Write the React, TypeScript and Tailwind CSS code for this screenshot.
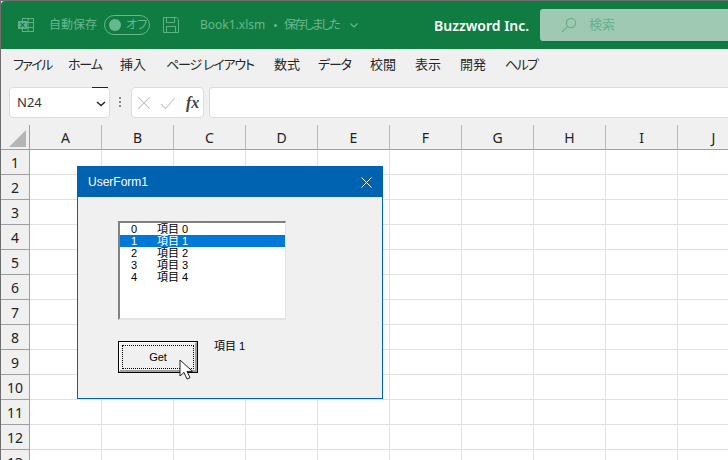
import React from "react";

const jp = "font-['Noto_Sans','Noto_Sans_CJK_JP',sans-serif] [font-feature-settings:'palt']";
const cols = ["A", "B", "C", "D", "E", "F", "G", "H", "I", "J"];
const rows = [1, 2, 3, 4, 5, 6, 7, 8, 9, 10, 11, 12, 13];
const tabs: [string, string][] = [
  ["ファイル", "w-[55px] tracking-[-1.6px]"],
  ["ホーム", "w-[52px] tracking-[-1.2px]"],
  ["挿入", "w-[46px]"],
  ["ページ レイアウト", "w-[108px] tracking-[-1.2px]"],
  ["数式", "w-[44px]"],
  ["データ", "w-[52px] tracking-[-1.2px]"],
  ["校閲", "w-[45px]"],
  ["表示", "w-[45px]"],
  ["開発", "w-[45px]"],
  ["ヘルプ", "w-[50px] tracking-[-1.6px]"],
];
const items = [0, 1, 2, 3, 4];

function TitleBar() {
  return (
    <div className="flex h-[48px] items-center rounded-tl-[4px] bg-[#107c41] text-[#66b88e]">
      <svg width="18" height="18" viewBox="0 0 18 18" className="ml-[16px]" fill="none" stroke="#5eb088" strokeWidth="1">
        <rect x="5.5" y="2.5" width="11" height="13" />
        <path d="M5.5 6.5h11M5.5 11.5h11M11 2.5v13" />
        <rect x="1" y="5" width="9" height="8" fill="#5eb088" stroke="none" />
        <path d="M3.5 6.8l4 4.4M7.5 6.8l-4 4.4" stroke="#107c41" strokeWidth="1.2" />
      </svg>
      <span className="ml-[14px] w-[50px] whitespace-nowrap text-[12px]">自動保存</span>
      <div className="ml-[5px] flex h-[20px] w-[46px] items-center rounded-full border border-[#66b88e]">
        <div className="ml-[4px] h-[12px] w-[12px] rounded-full bg-[#66b88e]" />
        <span className="ml-[5px] text-[12px] leading-none">オフ</span>
      </div>
      <svg width="16" height="16" viewBox="0 0 16 16" className="ml-[13px]" fill="none" stroke="#5eb088">
        <path d="M.5.5h13l2 2v13H.5z" />
        <path d="M3.5 .5v5h8v-5M3.5 15.5v-6h9v6" />
      </svg>
      <span className="ml-[21px] w-[68px] whitespace-nowrap text-[12px]">Book1.xlsm</span>
      <div className="ml-[6px] h-[3px] w-[3px] rounded-full bg-[#66b88e]" />
      <span className="ml-[7px] w-[60px] whitespace-nowrap text-[12px] tracking-[-2px]">保存しました</span>
      <svg width="10" height="10" viewBox="0 0 10 10" className="ml-[5px]" fill="none" stroke="#66b88e" strokeWidth="1.2">
        <path d="M1.5 3.5L5 7l3.5-3.5" />
      </svg>
      <span className="ml-[75px] w-[92px] whitespace-nowrap text-[14px] font-semibold text-white">Buzzword Inc.</span>
      <div className="ml-[14px] flex h-[32px] flex-1 items-center rounded-l-[3px] bg-[#9fc9b3]">
        <svg width="16" height="16" viewBox="0 0 16 16" className="ml-[21px]" fill="none" stroke="#5fb58a" strokeWidth="1.2">
          <circle cx="10" cy="6" r="4.6" />
          <path d="M6.6 9.4L1 15" />
        </svg>
        <span className="ml-[12px] text-[13px] text-[#5fb58a]">検索</span>
      </div>
    </div>
  );
}

function Ribbon() {
  return (
    <div className="flex h-[31px] items-center pl-[12px] text-[13px] text-[#262626]">
      {tabs.map(([t, w]) => (
        <span key={t} className={`${w} shrink-0 whitespace-nowrap`}>
          {t}
        </span>
      ))}
    </div>
  );
}

function FormulaBar() {
  return (
    <div className="flex h-[45px] items-start pl-[8px] pt-[7px]">
      <div className="relative flex h-[31px] w-[101px] items-center justify-between rounded-[4px] border border-[#dcdcdc] bg-white pl-[7px] pr-[3px]">
        <span className="pt-[1px] text-[13px] text-[#333]">N24</span>
        <svg width="10" height="10" viewBox="0 0 10 10" className="mt-[2px]" fill="none" stroke="#222" strokeWidth="1.4">
          <path d="M1 3l4 3.5L9 3" />
        </svg>
        <div className="absolute right-[1px] top-[-1px] h-[1px] w-[16px] bg-[#222]" />
      </div>
      <div className="ml-[9px] mt-[10px] flex w-[3px] flex-col gap-[2px]">
        <div className="h-[2px] w-[2px] bg-[#8a8a8a]" />
        <div className="h-[2px] w-[2px] bg-[#8a8a8a]" />
        <div className="h-[2px] w-[2px] bg-[#8a8a8a]" />
      </div>
      <div className="ml-[9px] flex h-[31px] w-[73px] items-center rounded-[4px] border border-[#dcdcdc] bg-white">
        <svg width="12" height="12" viewBox="0 0 12 12" className="ml-[6px]" fill="none" stroke="#c4c4c4" strokeWidth="1.1">
          <path d="M0 0l12 12M12 0L0 12" />
        </svg>
        <svg width="16" height="14" viewBox="0 0 16 14" className="ml-[10px]" fill="none" stroke="#c4c4c4" strokeWidth="1.1">
          <path d="M1 8l4.5 4.5L15 2" />
        </svg>
        <span className="ml-[10px] font-['Liberation_Serif',serif] text-[16px] font-bold italic leading-none text-[#444]">fx</span>
      </div>
      <div className="ml-[5px] h-[31px] flex-1 rounded-l-[4px] border border-r-0 border-[#dcdcdc] bg-white" />
    </div>
  );
}

function Sheet() {
  return (
    <div className="flex-1 overflow-hidden">
      <div className="flex h-[25px] w-[760px] bg-[#f0f0f0] text-[14px] text-[#222]">
        <div className="flex h-[25px] w-[29px] shrink-0 items-end justify-end border-r border-b border-[#9f9f9f] pb-[2px] pr-[3px]">
          <div className="h-0 w-0 border-b-[17px] border-l-[17px] border-b-[#b5b5b5] border-l-transparent" />
        </div>
        {cols.map((c) => (
          <div key={c} className="flex h-[25px] w-[72px] shrink-0 items-center justify-center border-r border-b border-r-[#b8b8b8] border-b-[#9f9f9f]">
            {c}
          </div>
        ))}
      </div>
      {rows.map((r) => (
        <div key={r} className="flex h-[25px] w-[760px]">
          <div className="flex h-[25px] w-[29px] shrink-0 items-center justify-center border-r border-b border-[#9f9f9f] bg-[#f0f0f0] text-[14px] text-[#222]">
            {r}
          </div>
          {cols.map((c) => (
            <div key={c} className="h-[25px] w-[72px] shrink-0 border-r border-b border-[#e0e0e0] bg-white" />
          ))}
        </div>
      ))}
    </div>
  );
}

function ListBox() {
  return (
    <div className="h-[99px] w-[168px] border-t-2 border-r border-b-2 border-l-2 border-[#e3e3e3] border-t-[#808080] border-l-[#808080] bg-white font-['Liberation_Sans','Noto_Sans_CJK_JP',sans-serif] text-[11px] leading-[12px] text-black">
      {items.map((i) => (
        <div key={i} className={`flex h-[12px] items-center ${i === 1 ? "bg-[#0078d7] text-white" : ""}`}>
          <span className="ml-[11px] w-[26px]">{i}</span>
          <span className="whitespace-nowrap">項目 {i}</span>
        </div>
      ))}
    </div>
  );
}

function Dialog() {
  return (
    <div className="absolute left-[76px] top-[165px] h-[233px] w-[306px] border border-[#0063b1] bg-[#f0f0f0]">
      <div className="flex h-[30px] items-center justify-between bg-[#0063b1] pl-[10px] pr-[10px] font-['Liberation_Sans',sans-serif] text-[12px] text-white">
        <span>UserForm1</span>
        <svg width="11" height="11" viewBox="0 0 11 11" fill="none" stroke="#fff" strokeWidth="1">
          <path d="M.5.5l10 10M10.5.5l-10 10" />
        </svg>
      </div>
      <div className="pl-[40px] pt-[24px] font-['Liberation_Sans','Noto_Sans_CJK_JP',sans-serif]">
        <ListBox />
        <div className="mt-[21px] flex items-start">
          <div className="relative h-[32px] w-[80px] border border-black bg-[#f0f0f0]">
            <div className="h-full w-full border-t border-r-2 border-b-2 border-l border-[#a0a0a0] border-t-white border-l-white pt-[2px] pr-[1px] pb-[1px] pl-[2px]">
              <div className="flex h-full w-full items-center justify-center border border-dotted border-black text-[11px] text-black">Get</div>
            </div>
            <svg width="14" height="22" viewBox="0 0 14 22" className="absolute left-[60px] top-[17px]">
              <path d="M1 1v16l4-3.5 3 6.5 3-1.3-3-6.3h5.5z" fill="#fff" stroke="#222" strokeWidth="1" />
            </svg>
          </div>
          <span className="ml-[16px] mt-[-3px] whitespace-nowrap text-[11px] text-black">項目 1</span>
        </div>
      </div>
    </div>
  );
}

export default function App() {
  return (
    <div className={`relative flex h-[460px] w-[728px] flex-col overflow-hidden border-t border-l border-[#6e6e6e] bg-[#f0f0f0] ${jp}`}>
      <TitleBar />
      <Ribbon />
      <FormulaBar />
      <Sheet />
      <Dialog />
    </div>
  );
}
